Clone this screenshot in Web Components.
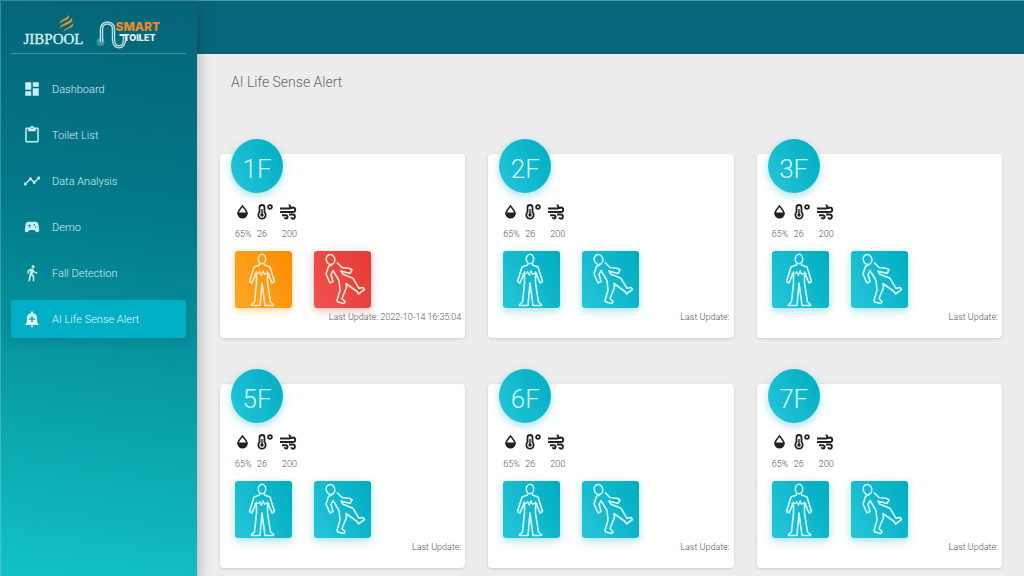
<!DOCTYPE html>
<html lang="en">
<head>
<meta charset="utf-8">
<meta name="viewport" content="width=device-width, initial-scale=1">
<title>AI Life Sense Alert</title>
<style>
  body {
    margin: 0;
    font-family: Roboto, "Liberation Sans", sans-serif;
    font-weight: 300;
    color: #555;
    background: #ededed;
  }
</style>
</head>
<body>
<app-shell>
  <side-bar slot="sidebar">
    <nav-item icon="dashboard">Dashboard</nav-item>
    <nav-item icon="clipboard">Toilet List</nav-item>
    <nav-item icon="timeline">Data Analysis</nav-item>
    <nav-item icon="gamepad">Demo</nav-item>
    <nav-item icon="walk">Fall Detection</nav-item>
    <nav-item icon="alert" active>AI Life Sense Alert</nav-item>
  </side-bar>
  <span slot="title">AI Life Sense Alert</span>
  <floor-card floor="1F" body="warning" fall="danger" updated="2022-10-14 16:35:04"></floor-card>
  <floor-card floor="2F"></floor-card>
  <floor-card floor="3F"></floor-card>
  <floor-card floor="5F"></floor-card>
  <floor-card floor="6F"></floor-card>
  <floor-card floor="7F"></floor-card>
</app-shell>

<script>
const ICONS = {
  dashboard: `<path d="M3 13h8V3H3v10zm0 8h8v-6H3v6zm10 0h8V11h-8v10zm0-18v6h8V3h-8z"/>`,
  clipboard: `<path d="M19 2h-4.18C14.4.84 13.3 0 12 0c-1.3 0-2.4.84-2.82 2H5c-1.1 0-2 .9-2 2v16c0 1.1.9 2 2 2h14c1.1 0 2-.9 2-2V4c0-1.1-.9-2-2-2zm-7 0c.55 0 1 .45 1 1s-.45 1-1 1-1-.45-1-1 .45-1 1-1zm7 18H5V4h2v3h10V4h2v16z"/>`,
  timeline: `<path d="M23 8c0 1.1-.9 2-2 2-.18 0-.35-.02-.51-.07l-3.56 3.55c.05.16.07.34.07.52 0 1.1-.9 2-2 2s-2-.9-2-2c0-.18.02-.36.07-.52l-2.55-2.55c-.16.05-.34.07-.52.07s-.36-.02-.52-.07l-4.55 4.56c.05.16.07.33.07.51 0 1.1-.9 2-2 2s-2-.9-2-2 .9-2 2-2c.18 0 .35.02.51.07l4.56-4.55C8.02 9.36 8 9.18 8 9c0-1.1.9-2 2-2s2 .9 2 2c0 .18-.02.36-.07.52l2.55 2.55c.16-.05.34-.07.52-.07s.36.02.52.07l3.55-3.56C19.02 8.35 19 8.18 19 8c0-1.1.9-2 2-2s2 .9 2 2z"/>`,
  gamepad: `<path d="M21.58 16.09l-1.09-7.66C20.21 6.46 18.52 5 16.53 5H7.47C5.48 5 3.79 6.46 3.51 8.43l-1.09 7.66C2.2 17.63 3.39 19 4.94 19c.68 0 1.32-.27 1.8-.75L9 16h6l2.25 2.25c.48.48 1.13.75 1.8.75 1.56 0 2.75-1.37 2.53-2.91zM11 11H9v2H8v-2H6v-1h2V8h1v2h2v1zm4-1c-.55 0-1-.45-1-1s.45-1 1-1 1 .45 1 1-.45 1-1 1zm2 3c-.55 0-1-.45-1-1s.45-1 1-1 1 .45 1 1-.45 1-1 1z"/>`,
  walk: `<path d="M13.5 5.5c1.1 0 2-.9 2-2s-.9-2-2-2-2 .9-2 2 .9 2 2 2zM9.8 8.9L7 23h2.1l1.8-8 2.1 2v6h2v-7.5l-2.1-2 .6-3C14.8 12 16.8 13 19 13v-2c-1.9 0-3.5-1-4.3-2.4l-1-1.6c-.4-.6-1-1-1.7-1-.3 0-.5.1-.8.1L6 8.3V13h2V9.6l1.8-.7"/>`,
  alert: `<path d="M10.01 21.01c0 1.1.89 1.99 1.99 1.99s1.99-.89 1.99-1.99h-3.98zm8.87-4.19V11c0-3.25-2.25-5.97-5.29-6.69v-.72C13.59 2.71 12.88 2 12 2s-1.59.71-1.59 1.59v.72C7.37 5.03 5.12 7.75 5.12 11v5.82L3 18.94V20h18v-1.06l-2.12-2.12zM16 13.01h-3v3h-2v-3H8V11h3V8h2v3h3v2.01z"/>`,
};

class AppShell extends HTMLElement {
  constructor() {
    super();
    this.attachShadow({ mode: "open" });
  }

  static get styles() {
    return /* css */`
      :host {
        display: grid;
        grid-template-columns: 197px 1fr;
        min-height: 100vh;
      }

      .page {
        display: flex;
        flex-direction: column;
      }

      header {
        box-sizing: border-box;
        height: 54px;
        border-top: 1px solid #4b95a3;
        background: #07677a;
      }

      main {
        padding: 16px 22px 8px 23px;
      }

      h1 {
        margin: 0 11px 59px;
        font-size: 14px;
        line-height: 25px;
        font-weight: 300;
        color: #666;
      }

      .grid {
        display: grid;
        grid-template-columns: repeat(3, 1fr);
        gap: 46px 23px;
      }
    `;
  }

  connectedCallback() {
    this.render();
  }

  render() {
    this.shadowRoot.innerHTML = /* html */`
    <style>${AppShell.styles}</style>
    <slot name="sidebar"></slot>
    <div class="page">
      <header></header>
      <main>
        <h1><slot name="title"></slot></h1>
        <div class="grid"><slot></slot></div>
      </main>
    </div>`;
  }
}

class BrandLogo extends HTMLElement {
  constructor() {
    super();
    this.attachShadow({ mode: "open" });
  }

  static get styles() {
    return /* css */`
      :host {
        display: block;
      }

      svg {
        display: block;
        width: 100%;
        height: 40px;
      }

      .jibpool {
        font: 400 15px "Liberation Serif", serif;
        fill: #d9f3f6;
        stroke: #d9f3f6;
        stroke-width: .3;
      }

      .smart {
        font: 800 12px Inter, sans-serif;
        fill: #ea8a2c;
      }

      .toilet {
        font: 800 9px Inter, sans-serif;
        fill: #e4fafc;
      }
    `;
  }

  connectedCallback() {
    this.render();
  }

  render() {
    this.shadowRoot.innerHTML = /* html */`
    <style>${BrandLogo.styles}</style>
    <svg viewBox="0 0 174 40" role="img" aria-label="Jibpool Smart Toilet">
      <g fill="#e0982f">
        <path d="M48 11c0-5 8-5 9-9 3 5-6 5-9 9z"/>
        <path d="M48 16c0-6 11-6 12-11 4 6-9 6-12 11z"/>
        <path d="M52 19c0-4 8-4 9-9 3 5-6 5-9 9z"/>
      </g>
      <text class="jibpool" x="12" y="31">JIBPOOL</text>
      <circle cx="89" cy="29" r="4" fill="#8fd3dc" opacity=".4"/>
      <g fill="none">
        <path d="M90 29V16c0-8 12-8 12 0v11c0 9 11 9 11 0v-5" stroke="#b9e6ec" stroke-width="3.500"/>
        <path d="M90 29V16c0-8 12-8 12 0v11c0 9 11 9 11 0v-5" stroke="#2b7f90" stroke-width="1"/>
        <path d="M108 22h6" stroke="#e4fafc" stroke-width="2"/>
      </g>
      <text class="smart" x="104" y="18">SMART</text>
      <text class="toilet" x="112" y="28">TOILET</text>
    </svg>`;
  }
}

class SideBar extends HTMLElement {
  constructor() {
    super();
    this.attachShadow({ mode: "open" });
  }

  static get styles() {
    return /* css */`
      :host {
        display: block;
        box-sizing: border-box;
        padding: 13px 11px;
        background: linear-gradient(188deg, #056477, #02798a 36%, #0797a2 62%, #12c2c5);
        box-shadow: inset 1px 1px rgba(190, 220, 225, .3), 0 8px 14px rgba(0, 0, 0, .3);
        z-index: 1;
      }

      brand-logo {
        border-bottom: 1px solid rgba(255, 255, 255, .25);
      }

      nav {
        display: flex;
        flex-direction: column;
        gap: 8px;
        margin-top: 16px;
      }
    `;
  }

  connectedCallback() {
    this.render();
  }

  render() {
    this.shadowRoot.innerHTML = /* html */`
    <style>${SideBar.styles}</style>
    <brand-logo></brand-logo>
    <nav><slot></slot></nav>`;
  }
}

class NavItem extends HTMLElement {
  constructor() {
    super();
    this.attachShadow({ mode: "open" });
  }

  static get styles() {
    return /* css */`
      :host {
        display: block;
      }

      a {
        display: flex;
        align-items: center;
        gap: 11px;
        height: 38px;
        padding: 0 12px;
        border-radius: 2px;
        font-size: 11px;
        color: #d3f1f4;
        text-decoration: none;
      }

      :host([active]) a {
        color: #e6fbff;
        background: #00aec5;
        box-shadow: 0 3px 8px rgba(0, 90, 105, .3);
      }

      svg {
        width: 18px;
        height: 18px;
        fill: #c5f0f6;
      }

      :host([active]) svg {
        fill: #e6fbff;
      }
    `;
  }

  connectedCallback() {
    this.render();
  }

  render() {
    this.shadowRoot.innerHTML = /* html */`
    <style>${NavItem.styles}</style>
    <a href="#">
      <svg viewBox="0 0 24 24" aria-hidden="true">${ICONS[this.getAttribute("icon")]}</svg>
      <slot></slot>
    </a>`;
  }
}

class SensorReadings extends HTMLElement {
  constructor() {
    super();
    this.attachShadow({ mode: "open" });
  }

  static get styles() {
    return /* css */`
      :host {
        display: grid;
        grid-template-columns: 18px 18px 18px;
        gap: 7px 4px;
        font-size: 9px;
        line-height: 12px;
      }

      svg {
        display: block;
        width: 18px;
        height: 18px;
        fill: none;
        stroke: #222;
        stroke-width: 2;
      }

      .solid {
        fill: #222;
        stroke: none;
      }

      span:last-child {
        text-align: right;
      }
    `;
  }

  connectedCallback() {
    this.render();
  }

  render() {
    this.shadowRoot.innerHTML = /* html */`
    <style>${SensorReadings.styles}</style>
    <svg viewBox="0 0 18 18" role="img" aria-label="Humidity">
      <path d="M7.500 3C5.700 5.500 3 7.800 3 10.300a4.500 4.500 0 0 0 9 0C12 7.800 9.300 5.500 7.500 3z" stroke-width="1.500"/>
      <path class="solid" d="M2.500 9.500h10c0 3.500-2 5.500-5 5.500s-5-2-5-5.500z"/>
    </svg>
    <svg viewBox="0 0 18 18" role="img" aria-label="Temperature">
      <path d="M2.500 9.200V4.500a2.500 2.500 0 0 1 5 0v4.700a3.700 3.700 0 1 1-5 0z" stroke-width="1.800"/>
      <path d="M5 6v5" stroke-width="1.400"/>
      <circle class="solid" cx="5" cy="12" r="1.700"/>
      <circle cx="13" cy="4" r="1.900" stroke-width="1.800"/>
    </svg>
    <svg viewBox="0 0 18 18" role="img" aria-label="Air quality">
      <path d="M1 5.500h8.500c2.500 0 2.300-3.200.2-3.200M1 9h13c3.200 0 2.800-4.500-.2-4.500-1 0-1.500.6-1.500 1.500M3 12.300h4c2.300 0 2 3.200 0 3.200-.9 0-1.300-.5-1.300-1.200M10 11.500h3.500c3.300 0 3 4.200.5 4.200-1.100 0-1.600-.6-1.600-1.400" stroke-width="1.900"/>
    </svg>
    <span>65%</span>
    <span>26</span>
    <span>200</span>`;
  }
}

class StatusTile extends HTMLElement {
  constructor() {
    super();
    this.attachShadow({ mode: "open" });
  }

  static get figures() {
    return {
      body: /* html */`
        <ellipse cx="27" cy="8" rx="3.700" ry="4.700"/>
        <path d="M24.500 12.500v1.500l-5.500 2-4.500 14.500 2.500 1.500 4.500-11v11l-2 19-3 2.500v1h8.500L27 32l3 22.500h8.500v-1l-3-2.500-3-19V21L37 32l2.500-1.500L35 16l-5.500-2v-1.500"/>
        <path d="M19.500 22.500h4l1.200-2 1.700 4 1.700-5 1.400 4 1-1h4" stroke-width="1.200"/>`,
      fall: /* html */`
        <ellipse cx="16.500" cy="8.500" rx="4.200" ry="5" transform="rotate(-18 16.500 8.500)"/>
        <path d="M18 13.500L14.500 15.500 12 23l4 9 3-1.500-2-7 2-4L25 29.500l1 9.500-3 10.500.8 1.500 6 1.500 1.200-2-3-3 4.500-11-.5-4 11 8 1.500 2.500 6-4.500-1.500-2-4 .8-6-10-10-4-2-3.300 9 2.500 2-3.500-2-1.500-8-1-5-5"/>`,
    };
  }

  static get styles() {
    return /* css */`
      :host {
        display: block;
        width: 57px;
        height: 57px;
        border-radius: 3px;
        background: linear-gradient(60deg, #26c6da, #00acc1);
        box-shadow: 0 3px 9px rgba(0, 172, 193, .35);
      }

      :host([state="warning"]) {
        background: linear-gradient(60deg, #ffa726, #fb8c00);
        box-shadow: 0 3px 9px rgba(255, 152, 0, .35);
      }

      :host([state="danger"]) {
        background: linear-gradient(60deg, #ef5350, #e53935);
        box-shadow: 0 3px 9px rgba(244, 67, 54, .35);
      }

      svg {
        display: block;
        fill: none;
        stroke: #d4fbff;
        stroke-width: 1.6;
        stroke-linejoin: round;
      }

      :host([state="warning"]) svg,
      :host([state="danger"]) svg {
        stroke: #ffebcf;
      }
    `;
  }

  connectedCallback() {
    this.render();
  }

  render() {
    const kind = this.getAttribute("kind");
    this.shadowRoot.innerHTML = /* html */`
    <style>${StatusTile.styles}</style>
    <svg viewBox="0 0 57 57" role="img" aria-label="${kind}">${StatusTile.figures[kind]}</svg>`;
  }
}

class FloorCard extends HTMLElement {
  constructor() {
    super();
    this.attachShadow({ mode: "open" });
  }

  static get styles() {
    return /* css */`
      :host {
        display: flex;
        flex-direction: column;
        box-sizing: border-box;
        padding: 0 4px 15px 15px;
        border-radius: 4px;
        background: #fff;
        box-shadow: 0 1px 3px rgba(0, 0, 0, .14);
      }

      h2 {
        display: flex;
        align-items: center;
        justify-content: center;
        width: 52px;
        height: 54px;
        margin: -15px 0 10px -4px;
        padding-top: 6px;
        box-sizing: border-box;
        border-radius: 50%;
        font-size: 26px;
        font-weight: 300;
        color: #d4f8fc;
        background: linear-gradient(60deg, #26c6da, #00acc1);
        box-shadow: 0 3px 9px rgba(0, 172, 193, .35);
      }

      .tiles {
        display: flex;
        gap: 22px;
        margin-top: 11px;
      }

      p {
        margin: 3px 0 0;
        font-size: 9px;
        line-height: 12px;
        text-align: right;
      }
    `;
  }

  connectedCallback() {
    this.render();
  }

  render() {
    this.shadowRoot.innerHTML = /* html */`
    <style>${FloorCard.styles}</style>
    <h2>${this.getAttribute("floor")}</h2>
    <sensor-readings></sensor-readings>
    <div class="tiles">
      <status-tile kind="body" state="${this.getAttribute("body") || "normal"}"></status-tile>
      <status-tile kind="fall" state="${this.getAttribute("fall") || "normal"}"></status-tile>
    </div>
    <p>Last Update: ${this.getAttribute("updated") || ""}</p>`;
  }
}

customElements.define("brand-logo", BrandLogo);
customElements.define("nav-item", NavItem);
customElements.define("side-bar", SideBar);
customElements.define("sensor-readings", SensorReadings);
customElements.define("status-tile", StatusTile);
customElements.define("floor-card", FloorCard);
customElements.define("app-shell", AppShell);
</script>
</body>
</html>
